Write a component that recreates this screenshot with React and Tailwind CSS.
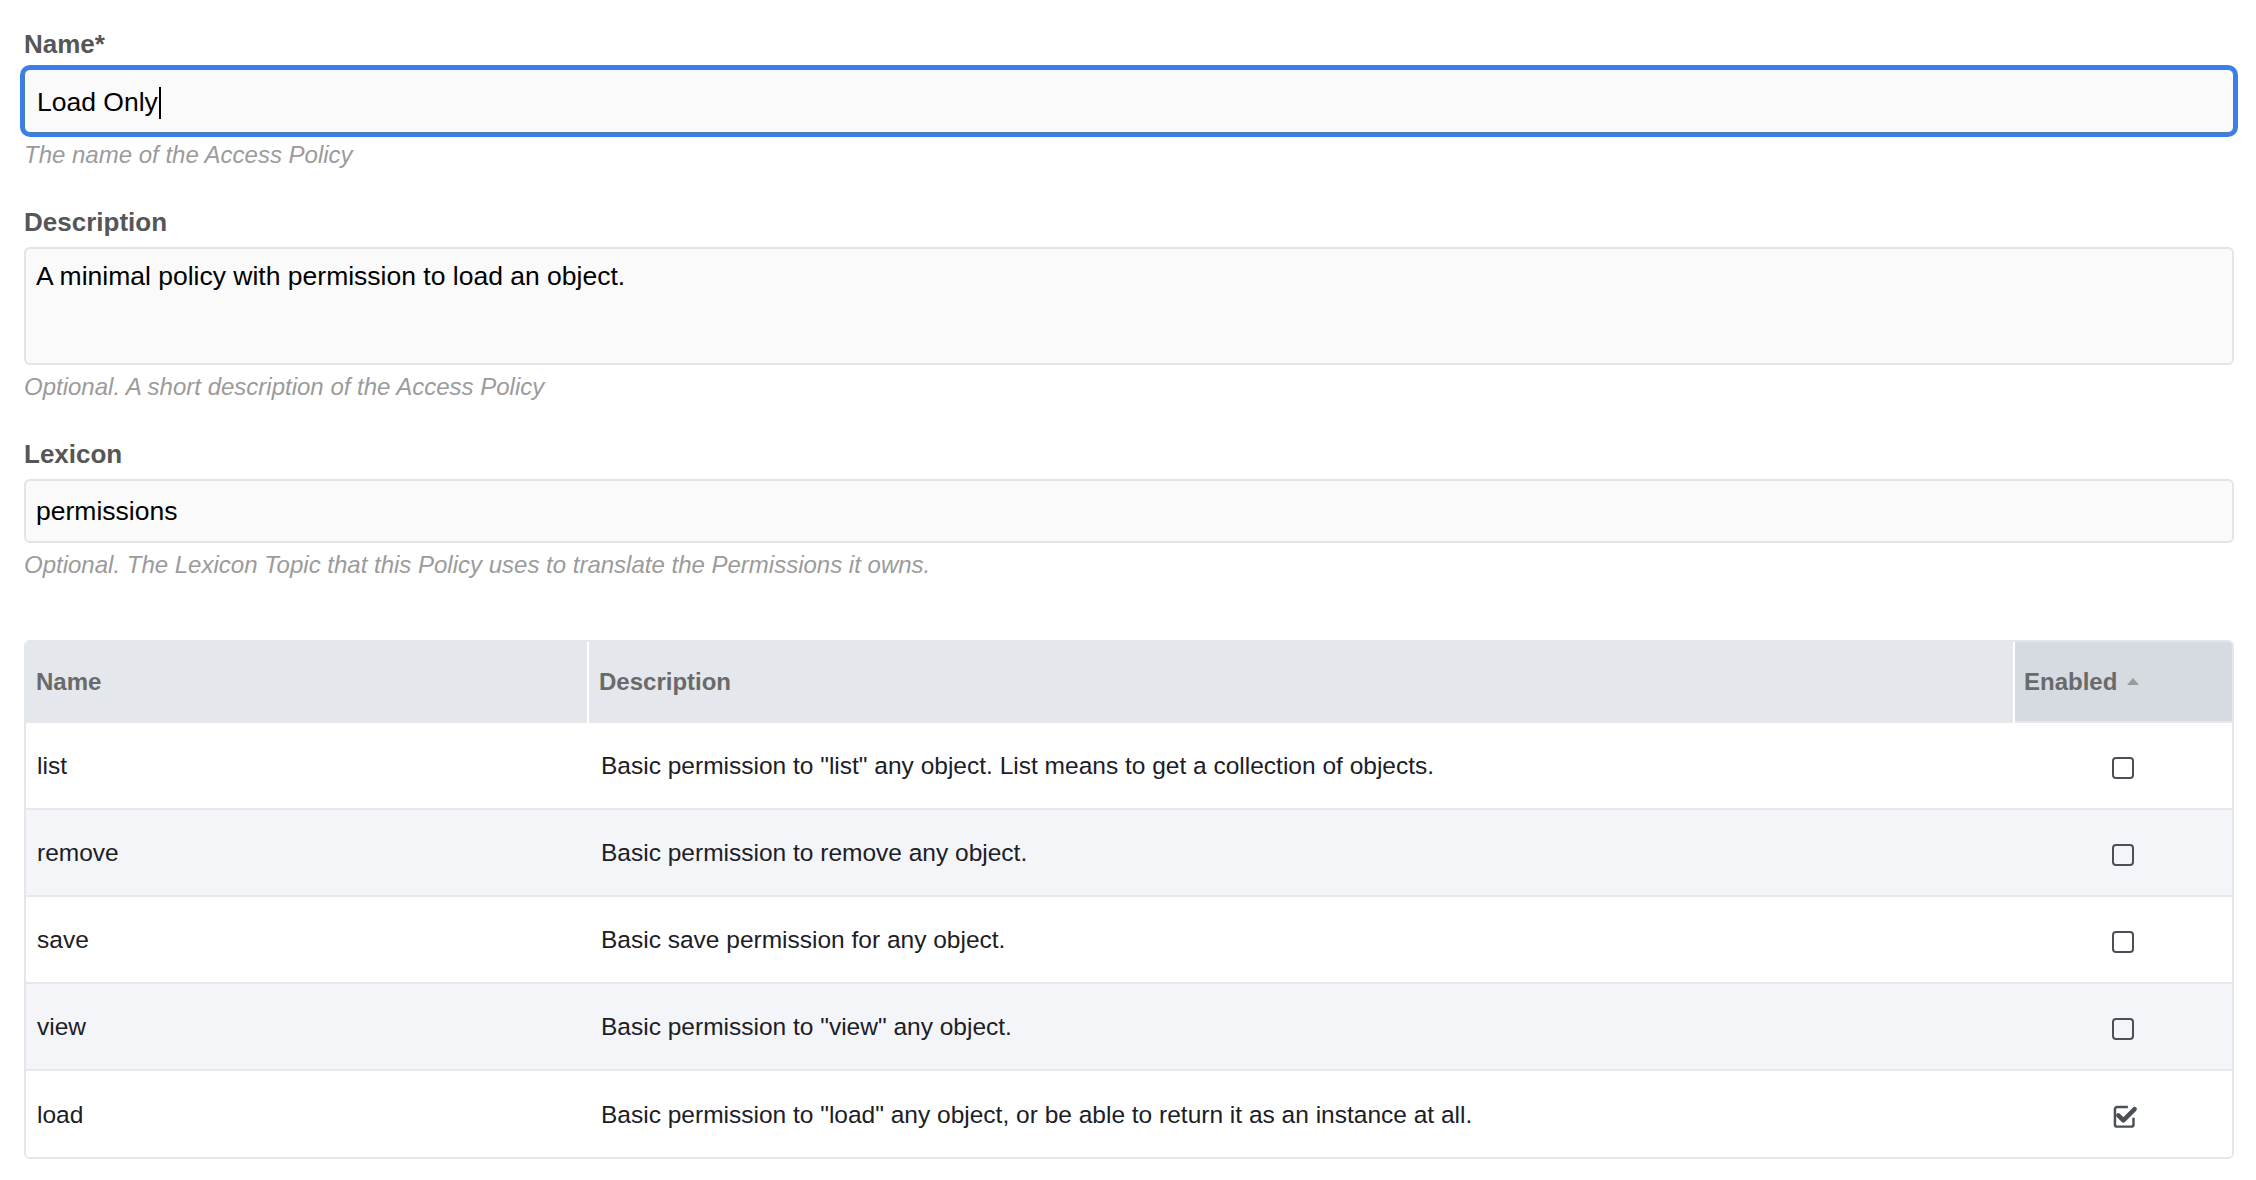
import React from "react";

const permissions = [
  { name: "list", detail: 'Basic permission to "list" any object. List means to get a collection of objects.', enabled: false },
  { name: "remove", detail: "Basic permission to remove any object.", enabled: false },
  { name: "save", detail: "Basic save permission for any object.", enabled: false },
  { name: "view", detail: 'Basic permission to "view" any object.', enabled: false },
  { name: "load", detail: 'Basic permission to "load" any object, or be able to return it as an instance at all.', enabled: true },
];

function CheckBox({ checked }) {
  if (!checked) {
    return <span className="block h-[22px] w-[22px] rounded-[4px] border-[2.5px] border-[#4b5057]" />;
  }
  return (
    <svg width="27" height="27" viewBox="0 0 24 24" className="ml-[3px] block">
      <path
        d="M15 3.5H5.5a2 2 0 0 0-2 2V19a2 2 0 0 0 2 2H18a2 2 0 0 0 2-2v-6"
        fill="none"
        stroke="#4b5057"
        strokeWidth="2.2"
      />
      <path
        d="M6.5 11l4.5 4.5L21 5.5"
        fill="none"
        stroke="#4b5057"
        strokeWidth="4"
        strokeLinecap="round"
        strokeLinejoin="round"
      />
    </svg>
  );
}

function Field({ label, help, children }) {
  return (
    <div className="mb-[38px]">
      <label className="mb-[11px] block text-[26px] font-bold leading-[28px] text-[#565656]">
        {label}
      </label>
      {children}
      <p className="mt-[7px] text-[24px] italic leading-[30px] text-[#9b9b9b]">{help}</p>
    </div>
  );
}

export default function App() {
  return (
    <main
      className="min-h-screen w-full bg-white pl-6 pr-[22px] pt-[30px] text-[#111]"
      style={{ fontFamily: '"Liberation Sans", Arial, sans-serif' }}
    >
      <Field label="Name*" help="The name of the Access Policy">
        <div className="flex h-[64px] items-center rounded-[6px] border border-[#4a7fae] bg-[#fafafa] px-3 pt-[4px] text-[26.5px] text-black shadow-[0_0_0_4px_#3a7ee9]">
          <span>Load Only</span>
          <span className="ml-px h-[32px] w-[2px] bg-black" />
        </div>
      </Field>

      <Field label="Description" help="Optional. A short description of the Access Policy">
        <div className="h-[118px] rounded-[6px] border-2 border-[#e4e4e4] bg-[#fafafa] px-[10px] pt-[11px] text-[26.5px] leading-[32px] text-black">
          A minimal policy with permission to load an object.
        </div>
      </Field>

      <Field label="Lexicon" help="Optional. The Lexicon Topic that this Policy uses to translate the Permissions it owns.">
        <div className="flex h-[64px] items-center rounded-[6px] border-2 border-[#e4e4e4] bg-[#fafafa] px-[10px] pt-[2px] text-[26.5px] text-black">
          permissions
        </div>
      </Field>

      <div className="mt-[60px] overflow-hidden rounded-[6px] border-2 border-[#e3e6ea]">
        <table className="w-full border-collapse text-[24.5px]">
          <thead>
            <tr className="h-[80px] bg-[#e4e7eb] text-left text-[24px] font-bold text-[#6a6a6a]">
              <th className="w-[562px] border-r-2 border-white pl-[10px]">Name</th>
              <th className="border-r-2 border-white pl-[10px]">Description</th>
              <th className="w-[218px] bg-[#d5dbe1] pl-[9px]">
                <span className="inline-flex items-center gap-[9px]">
                  Enabled
                  <svg width="14" height="9" viewBox="0 0 14 9">
                    <path d="M7 1L13 8H1z" fill="#9a9a9a" />
                  </svg>
                </span>
              </th>
            </tr>
          </thead>
          <tbody className="text-[#1b2026]">
            {permissions.map((p, i) => (
              <tr
                key={p.name}
                className={`h-[87px] border-t-2 border-[#e6e8eb] ${i % 2 === 1 ? "bg-[#f4f5f8]" : "bg-white"}`}
              >
                <td className="pl-[11px] pt-[2px]">{p.name}</td>
                <td className="pl-[13px] pt-[2px]">{p.detail}</td>
                <td>
                  <div className="flex justify-center pt-[4px]">
                    <CheckBox checked={p.enabled} />
                  </div>
                </td>
              </tr>
            ))}
          </tbody>
        </table>
      </div>
    </main>
  );
}
